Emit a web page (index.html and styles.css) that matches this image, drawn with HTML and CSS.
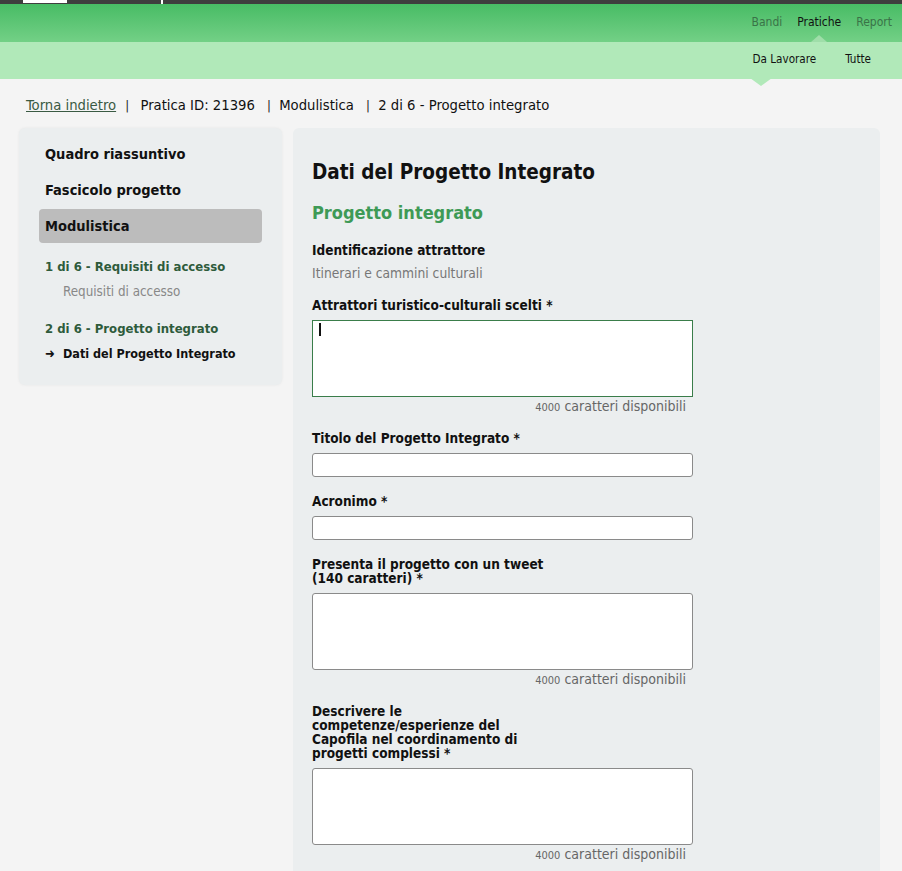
FILE: index.html
```html
<!DOCTYPE html>
<html lang="it">
<head>
  <meta charset="UTF-8" />
  <title>Dati del Progetto Integrato</title>
  <link rel="stylesheet" href="styles.css">
</head>
<body>
  <div class="topbar">
    <span class="topbar-tab"></span>
    <span class="topbar-mark"></span>
  </div>

  <!-- Main navigation -->
  <div class="mainnav">
    <a class="nav-link">Bandi</a>
    <a class="nav-link current">Pratiche</a>
    <a class="nav-link">Report</a>
  </div>
  <div class="subnav">
    <a class="subnav-link current">Da Lavorare</a>
    <a class="subnav-link">Tutte</a>
  </div>

  <div class="crumbs">
    <a class="back-link">Torna indietro</a>
    <span class="sep">|</span> Pratica ID: 21396
    <span class="sep wide">|</span> Modulistica
    <span class="sep wide">|</span> 2 di 6 - Progetto integrato
  </div>

  <div class="layout">
    <!-- Sidebar -->
    <div class="sidebar">
      <div class="side-item">Quadro riassuntivo</div>
      <div class="side-item">Fascicolo progetto</div>
      <div class="side-item active">Modulistica</div>
      <div class="side-step">1 di 6 - Requisiti di accesso</div>
      <div class="side-sub">Requisiti di accesso</div>
      <div class="side-step">2 di 6 - Progetto integrato</div>
      <div class="side-sub current"><span class="arrow">&#10140;</span>Dati del Progetto Integrato</div>
    </div>

    <!-- Form -->
    <div class="content">
      <h1>Dati del Progetto Integrato</h1>
      <h2>Progetto integrato</h2>

      <div class="field">
        <div class="label">Identificazione attrattore</div>
        <div class="value">Itinerari e cammini culturali</div>
      </div>

      <div class="field">
        <label class="label">Attrattori turistico-culturali scelti *</label>
        <div class="textarea-wrap">
          <textarea class="focused"></textarea>
          <span class="caret"></span>
        </div>
        <div class="counter"><span class="num">4000</span> caratteri disponibili</div>
      </div>

      <div class="field">
        <label class="label">Titolo del Progetto Integrato *</label>
        <input type="text">
      </div>

      <div class="field">
        <label class="label">Acronimo *</label>
        <input type="text">
      </div>

      <div class="field">
        <label class="label narrow">Presenta il progetto con un tweet (140 caratteri) *</label>
        <textarea></textarea>
        <div class="counter"><span class="num">4000</span> caratteri disponibili</div>
      </div>

      <div class="field">
        <label class="label narrow">Descrivere le competenze/esperienze del Capofila nel coordinamento di progetti complessi *</label>
        <textarea></textarea>
        <div class="counter"><span class="num">4000</span> caratteri disponibili</div>
      </div>
    </div>
  </div>
</body>
</html>
```

FILE: styles.css
```css
* {
  box-sizing: border-box;
  margin: 0;
  padding: 0;
}
body {
  font-family: 'DejaVu Sans Condensed', 'DejaVu Sans', Tahoma, sans-serif;
  background-color: #f4f4f4;
  color: #111;
  font-size: 13px;
}
a {
  cursor: pointer;
}
.topbar {
  height: 4px;
  background-color: #3e3e3e;
  position: relative;
}
.topbar-tab {
  position: absolute;
  left: 23px;
  top: 0;
  width: 44px;
  height: 3px;
  background-color: #fff;
}
.topbar-mark {
  position: absolute;
  left: 161px;
  top: 0;
  width: 2px;
  height: 4px;
  background-color: #fff;
}
.mainnav {
  height: 38px;
  background: linear-gradient(#48bc65, #73d086);
  display: flex;
  justify-content: flex-end;
  align-items: center;
  gap: 15px;
  padding-right: 10px;
  padding-bottom: 2px;
  font-size: 12px;
}
.nav-link {
  color: #3a7348;
  position: relative;
}
.nav-link.current {
  color: #111;
}
.nav-link.current::after {
  content: '';
  position: absolute;
  left: 50%;
  bottom: -13px;
  margin-left: -8px;
  border: 8px solid transparent;
  border-top: 0;
  border-bottom-color: #9fdea9;
  border-bottom-width: 7px;
}
.subnav {
  height: 37px;
  background-color: #b1e9b9;
  display: flex;
  justify-content: flex-end;
  align-items: center;
  gap: 29px;
  padding-right: 31px;
  padding-bottom: 4px;
  font-size: 11.6px;
}
.subnav-link {
  color: #111;
  position: relative;
}
.subnav-link.current::after {
  content: '';
  position: absolute;
  left: -3px;
  bottom: -20px;
  border: 11px solid transparent;
  border-bottom: 0;
  border-top-color: #b1e9b9;
  border-top-width: 8px;
}
.crumbs {
  padding: 17px 26px 13px;
  font-size: 14.7px;
  line-height: 18px;
  color: #111;
}
.back-link {
  color: #3a5a43;
  text-decoration: underline;
}
.sep {
  margin: 0 7px 0 5px;
  font-size: 13px;
  color: #222;
}
.sep.wide {
  margin: 0 4px 0 8px;
}
.layout {
  display: flex;
  align-items: flex-start;
  gap: 11px;
  padding-left: 19px;
}
.sidebar {
  width: 263px;
  background-color: #ebeeef;
  border-radius: 6px;
  box-shadow: 0 0 3px rgba(0, 0, 0, 0.06);
  padding: 9px 20px 23px;
  white-space: nowrap;
}
.side-item {
  font-size: 14.5px;
  font-weight: bold;
  padding: 0 6px;
  height: 34px;
  line-height: 34px;
  margin-bottom: 2px;
}
.side-item.active {
  background-color: #bcbcbc;
  border-radius: 4px;
  margin-bottom: 16px;
}
.side-step {
  font-size: 13px;
  font-weight: bold;
  color: #2e5b3b;
  padding-left: 6px;
  line-height: 16px;
  margin-bottom: 9px;
}
.side-sub {
  font-size: 13.3px;
  color: #888;
  padding-left: 24px;
  line-height: 16px;
  margin-bottom: 21px;
}
.side-sub.current {
  color: #111;
  font-size: 12.5px;
  font-weight: bold;
  padding-left: 6px;
  margin-bottom: 0;
}
.arrow {
  display: inline-block;
  width: 18px;
  font-size: 13px;
}
.content {
  width: 587px;
  min-height: 760px;
  background-color: #ebeeef;
  border-radius: 6px 6px 0 0;
  padding: 32px 19px 10px;
}
h1 {
  font-size: 20.5px;
  font-weight: bold;
  color: #111;
  margin-bottom: 18px;
}
h2 {
  font-size: 18px;
  font-weight: bold;
  color: #3e9a56;
  margin-bottom: 20px;
}
.field {
  width: 381px;
  margin-bottom: 17px;
}
.label {
  display: block;
  font-size: 13.5px;
  font-weight: bold;
  line-height: 14px;
  margin-bottom: 8px;
}
.label.narrow {
  width: 240px;
}
.value {
  color: #777;
  font-size: 13.7px;
  margin-top: 1px;
}
.textarea-wrap {
  position: relative;
}
.caret {
  position: absolute;
  left: 7px;
  top: 3px;
  width: 2px;
  height: 13px;
  background-color: #111;
}
textarea,
input {
  display: block;
  width: 381px;
  border: 1px solid #8a8a8a;
  border-radius: 3px;
  background-color: #fff;
  font-family: inherit;
  resize: none;
}
textarea {
  height: 77px;
}
textarea.focused {
  border-color: #3a7d4a;
  border-radius: 0;
}
input {
  height: 24px;
}
.counter {
  text-align: right;
  padding-right: 7px;
  margin-top: 1px;
  color: #666;
  font-size: 14px;
}
.counter .num {
  font-size: 11px;
}
```
